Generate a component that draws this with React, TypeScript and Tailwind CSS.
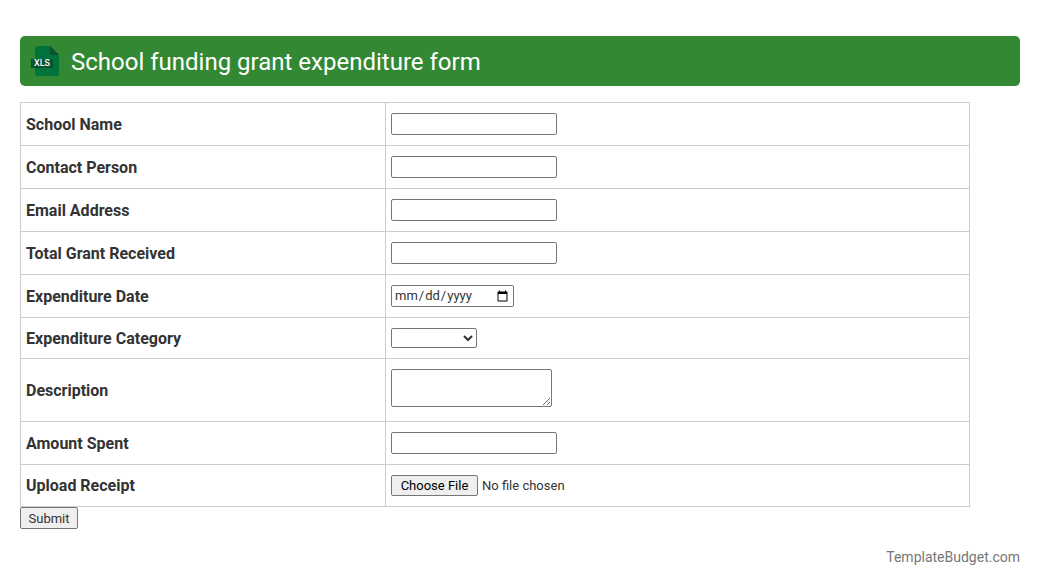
import type { ReactNode } from "react";

const INPUT =
  "block h-[22px] rounded-xs border border-[#767676] bg-white px-0.5 text-[13px] leading-4";

const Row = ({
  id,
  label,
  children,
}: {
  id: string;
  label: string;
  children: ReactNode;
}) => (
  <tr>
    <th
      scope="row"
      className="w-[365px] border border-[#ccc] px-[5px] text-left align-middle leading-[21px] font-bold"
    >
      <label htmlFor={id}>{label}</label>
    </th>
    <td className="border border-[#ccc] px-[5px] py-[10px]">{children}</td>
  </tr>
);

const TextRow = ({ id, label }: { id: string; label: string }) => (
  <Row id={id} label={label}>
    <input id={id} name={id} type="text" className={`${INPUT} w-[166px]`} />
  </Row>
);

const XlsIcon = () => (
  <svg width="30" height="32" viewBox="0 0 30 32" aria-hidden="true">
    <path
      d="M8 1h12l9 9v18a3 3 0 0 1-3 3H8a3 3 0 0 1-3-3V4a3 3 0 0 1 3-3z"
      fill="#00733b"
    />
    <path d="M20 1l9 9h-7a2 2 0 0 1-2-2z" fill="#0a5131" />
    <path d="M1 14h22v9H1z" fill="#07522f" />
    <text
      x="12"
      y="21"
      textAnchor="middle"
      fill="#fff"
      fontSize="9"
      fontWeight="500"
      fontFamily="Roboto, sans-serif"
    >
      XLS
    </text>
  </svg>
);

const App = () => {
  return (
    <div className="px-5 pt-9 font-[Roboto,sans-serif] text-base leading-5 text-[#333]">
      <header className="mb-4 flex h-[50px] items-center gap-[11px] rounded-[5px] bg-[#338833] px-[10px] text-white">
        <XlsIcon />
        <h1 className="pt-0.5 text-2xl">
          School funding grant expenditure form
        </h1>
      </header>

      <form onSubmit={(e) => e.preventDefault()}>
        <table className="w-[95%] table-fixed border-collapse">
          <tbody>
            <TextRow id="school" label="School Name" />
            <TextRow id="contact" label="Contact Person" />
            <TextRow id="email" label="Email Address" />
            <TextRow id="total" label="Total Grant Received" />
            <Row id="date" label="Expenditure Date">
              <input
                id="date"
                name="date"
                type="date"
                className={`${INPUT} w-[123px]`}
              />
            </Row>
            <Row id="category" label="Expenditure Category">
              <select
                id="category"
                name="category"
                defaultValue=""
                className="block h-5 w-[86px] rounded-xs border border-[#767676] bg-white text-[13px]"
              >
                <option value=""></option>
                <option>Supplies</option>
                <option>Equipment</option>
                <option>Travel</option>
                <option>Other</option>
              </select>
            </Row>
            <Row id="description" label="Description">
              <textarea
                id="description"
                name="description"
                className="mb-1 block h-[38px] w-[161px] rounded-xs border border-[#767676] bg-white p-0.5 text-[13px]"
              />
            </Row>
            <TextRow id="amount" label="Amount Spent" />
            <Row id="receipt" label="Upload Receipt">
              <input
                id="receipt"
                name="receipt"
                type="file"
                className="block h-[21px] text-[13px] leading-4 file:me-1 file:h-[21px] file:w-[87px] file:rounded-xs file:border file:border-solid file:border-[#767676] file:bg-[#efefef] file:text-black"
              />
            </Row>
          </tbody>
        </table>
        <button
          type="submit"
          className="block h-[22px] w-[58px] rounded-xs border border-[#767676] bg-[#efefef] text-[13px] leading-[15px]"
        >
          Submit
        </button>
      </form>

      <footer className="mt-[18px] text-right text-sm text-[#777]">
        TemplateBudget.com
      </footer>
    </div>
  );
};

export default App;
